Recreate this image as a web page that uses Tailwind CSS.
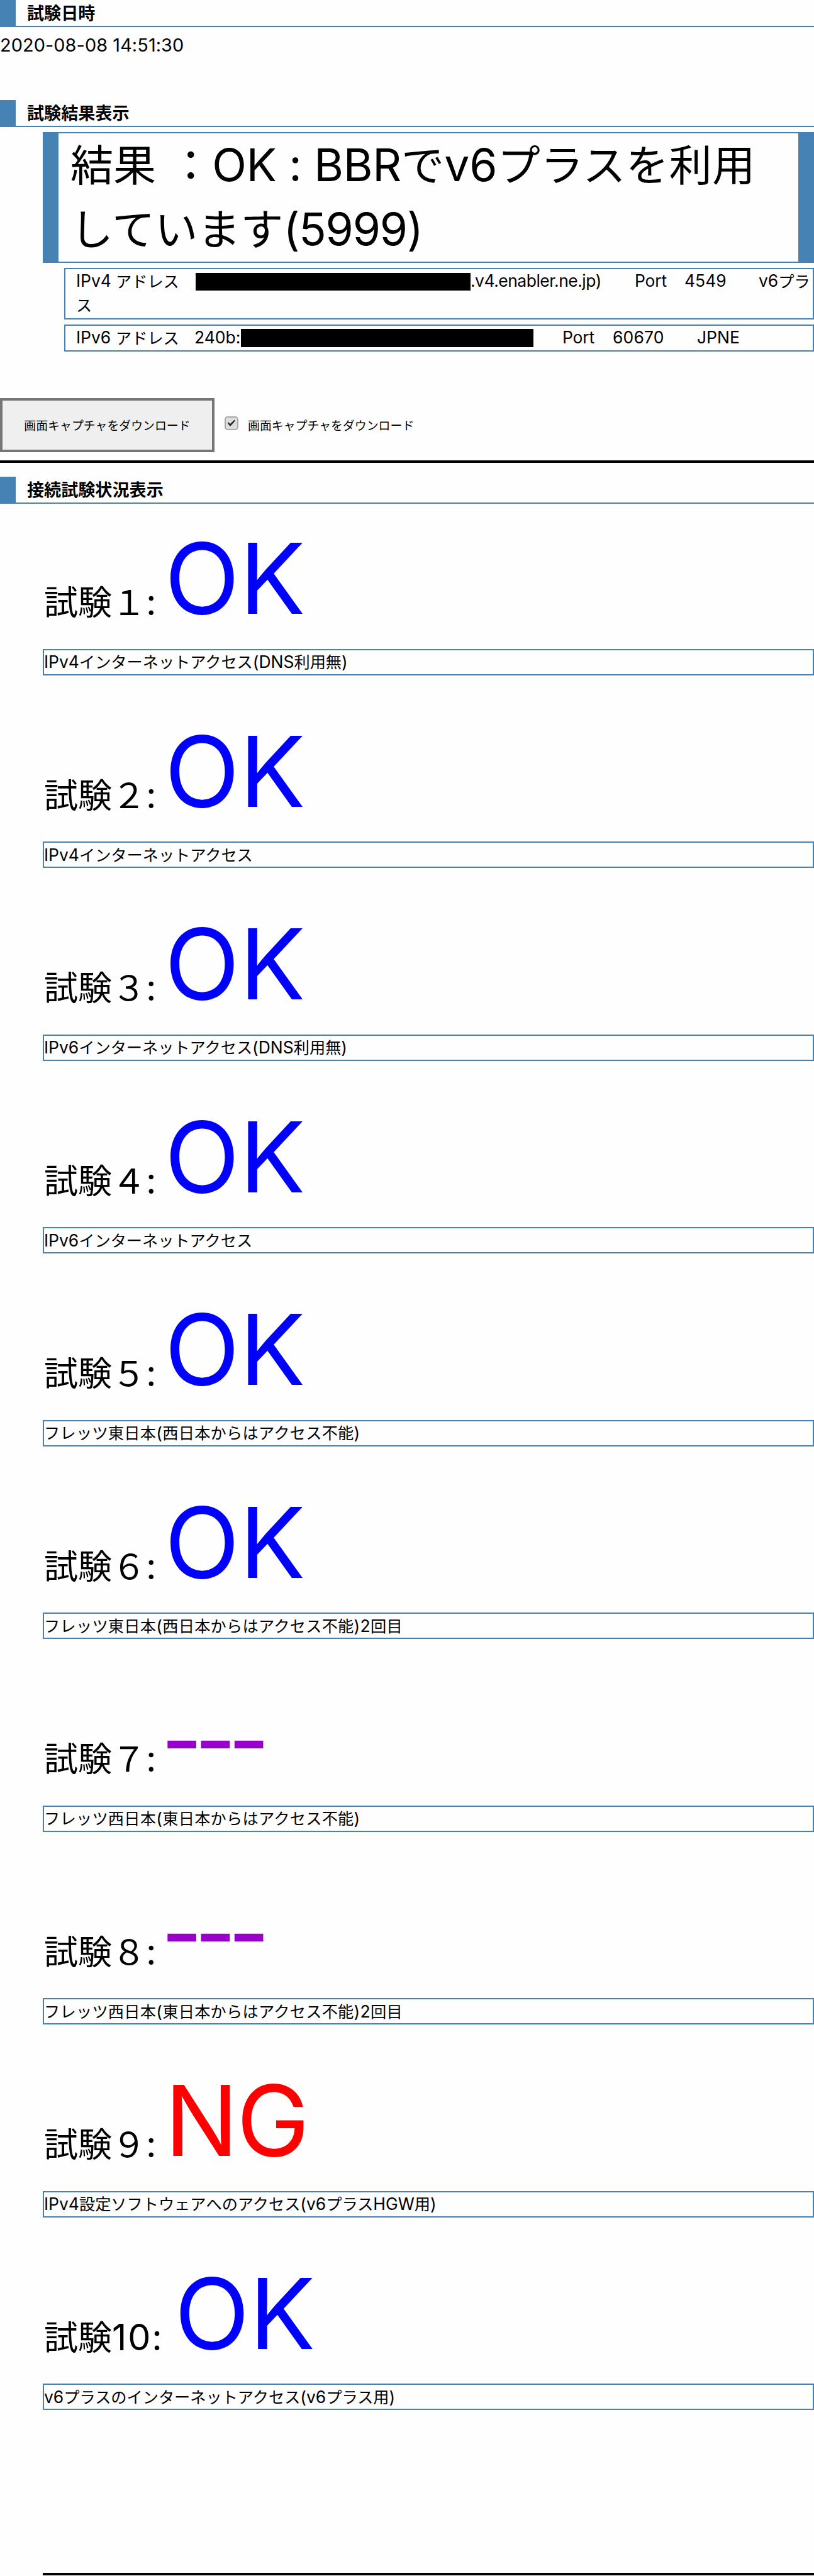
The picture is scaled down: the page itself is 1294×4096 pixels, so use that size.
<!DOCTYPE html>
<html lang="ja">
<head>
<meta charset="utf-8">
<title>試験結果表示</title>
<script src="https://cdn.jsdelivr.net/npm/@tailwindcss/browser@4"></script>
</head>
<body class="w-[1294px] h-[4096px] overflow-hidden bg-[#fefefe] text-black font-['Noto_Sans_CJK_JP',sans-serif] whitespace-nowrap">
<h2 class="h-[42.5px] border-l-[25px] border-b-2 border-[#4682b4] pl-[18px] text-[27.1px] leading-[40px] font-bold">試験日時</h2>
<p class="h-[116px] text-[27.2px] leading-[54.6px]"><span class="font-[Inter] text-[1.06em] leading-none tracking-[0.1px]">2020-08-08 14:51:30</span></p>
<h2 class="h-[43px] border-l-[25px] border-b-2 border-[#4682b4] pl-[18px] text-[27.1px] leading-[40px] font-bold">試験結果表示</h2>
<section class="mt-2 ml-[68px] h-[208.5px] border-x-[25px] border-y-2 border-[#4682b4] pl-[19px]">
<p class="-mt-[4px] text-[68.1px] leading-[102px]">結果<span class="inline-block w-[21px]"> </span>：<span class="font-[Inter] text-[1.05em] leading-none tracking-[-0.3px]">OK : BBR</span>で<span class="font-[Inter] text-[1.05em] leading-none">v6</span><span class="tracking-[0.5px]">プラスを利用</span><br>しています<span class="font-[Inter] text-[1.05em] leading-none tracking-[-1.2px]">(5999)</span></p>
</section>
<div class="ml-[102px] mt-2 h-[82px] border-2 border-[#4682b4] pl-[17px] text-[25.2px]">
<div class="-mt-px flex leading-[38.3px]"><span class="w-[63px] font-[Inter] text-[1.05em]">IPv4</span><span class="w-[127px]">アドレス</span><span class="mt-[7px] h-7 w-[437px] bg-black"></span><span class="w-[261px] font-[Inter] text-[1.05em] tracking-[-0.5px]">.v4.enabler.ne.jp)</span><span class="w-[79px] font-[Inter] text-[1.05em] tracking-[-0.2px]">Port</span><span class="w-[118px] font-[Inter] text-[1.05em]">4549</span><span class="font-[Inter] text-[1.05em]">v6</span><span>プラ</span></div>
<div class="leading-[38.3px]">ス</div>
</div>
<div class="ml-[102px] mt-2 h-[43px] border-2 border-[#4682b4] pl-[17px] text-[25.2px]">
<div class="-mt-px flex leading-[38.3px]"><span class="w-[63px] font-[Inter] text-[1.05em]">IPv6</span><span class="w-[125px]">アドレス</span><span class="w-[74px] font-[Inter] text-[1.05em]">240b:</span><span class="mt-[6px] h-[29px] w-[465px] bg-black"></span><span class="ml-[46px] w-[80px] font-[Inter] text-[1.05em] tracking-[-0.2px]">Port</span><span class="w-[134px] font-[Inter] text-[1.05em] tracking-[0.2px]">60670</span><span class="font-[Inter] text-[1.05em]">JPNE</span></div>
</div>
<div class="mt-[74px] flex h-[86px] items-center text-[18.9px]">
<button class="h-full w-[341px] border-4 border-[#767676] bg-[#efefef]">画面キャプチャをダウンロード</button>
<span class="ml-4 -mt-[6px] block h-[22px] w-[22px] rounded-[5px] border-2 border-[#a9a9a9] bg-[#dedede]"><svg viewBox="0 0 18 18" class="h-full w-full"><path d="M2.5 8.5 L4.5 7.5 L7 10 L13.5 3.5 L15 5 L7 14 Z" fill="#222"/></svg></span>
<label class="ml-[15px]">画面キャプチャをダウンロード</label>
</div>
<hr class="mt-[13px] border-t-4 border-black">
<h2 class="mt-[22px] h-[42.5px] border-l-[25px] border-b-2 border-[#4682b4] pl-[18px] text-[27.1px] leading-[40px] font-bold">接続試験状況表示</h2>

<main class="-mt-[33px] ml-[68px]">
<section class="h-[306.5px]">
<p class="h-[264.2px] pt-[74.5px] pl-[2px] text-[54px] leading-none"><span class="align-[-2px]">試験１<span class="font-[Inter] text-[57.4px] leading-none tracking-[-1.5px]">: </span></span><span class="font-[Inter] text-[155.7px] leading-none text-[#0000ff]">OK</span></p>
<div class="h-[42.3px] border-2 border-[#4682b4] text-[25.2px] leading-[38px]"><p class="-mt-[1.5px]"><span class="font-[Inter] text-[1.05em] leading-none">IPv4</span>インターネットアクセス<span class="font-[Inter] text-[1.05em] leading-none">(DNS</span>利用無<span class="font-[Inter] text-[1.05em] leading-none">)</span></p></div>
</section>
<section class="h-[306.5px]">
<p class="h-[264.2px] pt-[74.5px] pl-[2px] text-[54px] leading-none"><span class="align-[-2px]">試験２<span class="font-[Inter] text-[57.4px] leading-none tracking-[-1.5px]">: </span></span><span class="font-[Inter] text-[155.7px] leading-none text-[#0000ff]">OK</span></p>
<div class="h-[42.3px] border-2 border-[#4682b4] text-[25.2px] leading-[38px]"><p class="-mt-[1.5px]"><span class="font-[Inter] text-[1.05em] leading-none">IPv4</span>インターネットアクセス</p></div>
</section>
<section class="h-[306.5px]">
<p class="h-[264.2px] pt-[74.5px] pl-[2px] text-[54px] leading-none"><span class="align-[-2px]">試験３<span class="font-[Inter] text-[57.4px] leading-none tracking-[-1.5px]">: </span></span><span class="font-[Inter] text-[155.7px] leading-none text-[#0000ff]">OK</span></p>
<div class="h-[42.3px] border-2 border-[#4682b4] text-[25.2px] leading-[38px]"><p class="-mt-[1.5px]"><span class="font-[Inter] text-[1.05em] leading-none">IPv6</span>インターネットアクセス<span class="font-[Inter] text-[1.05em] leading-none">(DNS</span>利用無<span class="font-[Inter] text-[1.05em] leading-none">)</span></p></div>
</section>
<section class="h-[306.5px]">
<p class="h-[264.2px] pt-[74.5px] pl-[2px] text-[54px] leading-none"><span class="align-[-2px]">試験４<span class="font-[Inter] text-[57.4px] leading-none tracking-[-1.5px]">: </span></span><span class="font-[Inter] text-[155.7px] leading-none text-[#0000ff]">OK</span></p>
<div class="h-[42.3px] border-2 border-[#4682b4] text-[25.2px] leading-[38px]"><p class="-mt-[1.5px]"><span class="font-[Inter] text-[1.05em] leading-none">IPv6</span>インターネットアクセス</p></div>
</section>
<section class="h-[306.5px]">
<p class="h-[264.2px] pt-[74.5px] pl-[2px] text-[54px] leading-none"><span class="align-[-2px]">試験５<span class="font-[Inter] text-[57.4px] leading-none tracking-[-1.5px]">: </span></span><span class="font-[Inter] text-[155.7px] leading-none text-[#0000ff]">OK</span></p>
<div class="h-[42.3px] border-2 border-[#4682b4] text-[25.2px] leading-[38px]"><p class="-mt-[1.5px] tracking-[0.28px]">フレッツ東日本<span class="font-[Inter] text-[1.05em] leading-none">(</span>西日本からはアクセス不能<span class="font-[Inter] text-[1.05em] leading-none">)</span></p></div>
</section>
<section class="h-[306.5px]">
<p class="h-[264.2px] pt-[74.5px] pl-[2px] text-[54px] leading-none"><span class="align-[-2px]">試験６<span class="font-[Inter] text-[57.4px] leading-none tracking-[-1.5px]">: </span></span><span class="font-[Inter] text-[155.7px] leading-none text-[#0000ff]">OK</span></p>
<div class="h-[42.3px] border-2 border-[#4682b4] text-[25.2px] leading-[38px]"><p class="-mt-[1.5px] tracking-[0.28px]">フレッツ東日本<span class="font-[Inter] text-[1.05em] leading-none">(</span>西日本からはアクセス不能<span class="font-[Inter] text-[1.05em] leading-none">)2</span>回目</p></div>
</section>
<section class="h-[306.5px]">
<p class="h-[264.2px] pt-[74.5px] pl-[2px] text-[54px] leading-none"><span class="align-[-2px]">試験７<span class="font-[Inter] text-[57.4px] leading-none tracking-[-1.5px]">: </span></span><span class="font-[Inter] text-[155.7px] leading-none text-[#9900cc]"><span class="-ml-[4px] inline-block origin-left scale-x-120 font-['Liberation_Sans'] tracking-[-7.5px]">---</span></span></p>
<div class="h-[42.3px] border-2 border-[#4682b4] text-[25.2px] leading-[38px]"><p class="-mt-[1.5px] tracking-[0.28px]">フレッツ西日本<span class="font-[Inter] text-[1.05em] leading-none">(</span>東日本からはアクセス不能<span class="font-[Inter] text-[1.05em] leading-none">)</span></p></div>
</section>
<section class="h-[306.5px]">
<p class="h-[264.2px] pt-[74.5px] pl-[2px] text-[54px] leading-none"><span class="align-[-2px]">試験８<span class="font-[Inter] text-[57.4px] leading-none tracking-[-1.5px]">: </span></span><span class="font-[Inter] text-[155.7px] leading-none text-[#9900cc]"><span class="-ml-[4px] inline-block origin-left scale-x-120 font-['Liberation_Sans'] tracking-[-7.5px]">---</span></span></p>
<div class="h-[42.3px] border-2 border-[#4682b4] text-[25.2px] leading-[38px]"><p class="-mt-[1.5px] tracking-[0.28px]">フレッツ西日本<span class="font-[Inter] text-[1.05em] leading-none">(</span>東日本からはアクセス不能<span class="font-[Inter] text-[1.05em] leading-none">)2</span>回目</p></div>
</section>
<section class="h-[306.5px]">
<p class="h-[264.2px] pt-[74.5px] pl-[2px] text-[54px] leading-none"><span class="align-[-2px]">試験９<span class="font-[Inter] text-[57.4px] leading-none tracking-[-1.5px]">: </span></span><span class="font-[Inter] text-[155.7px] leading-none tracking-[-3px] text-[#ff0000]">NG</span></p>
<div class="h-[42.3px] border-2 border-[#4682b4] text-[25.2px] leading-[38px]"><p class="-mt-[1.5px]"><span class="font-[Inter] text-[1.05em] leading-none">IPv4</span>設定ソフトウェアへのアクセス<span class="font-[Inter] text-[1.05em] leading-none">(v6</span>プラス<span class="font-[Inter] text-[1.05em] leading-none">HGW</span>用<span class="font-[Inter] text-[1.05em] leading-none">)</span></p></div>
</section>
<section class="h-[306.5px]">
<p class="h-[264.2px] pt-[74.5px] pl-[2px] text-[54px] leading-none"><span class="align-[-2px]">試験<span class="font-[Inter] text-[57.4px] leading-none tracking-[1.8px]">10: </span></span><span class="font-[Inter] text-[155.7px] leading-none text-[#0000ff]">OK</span></p>
<div class="h-[42.3px] border-2 border-[#4682b4] text-[25.2px] leading-[38px]"><p class="-mt-[1.5px]"><span class="font-[Inter] text-[1.05em] leading-none">v6</span>プラスのインターネットアクセス<span class="font-[Inter] text-[1.05em] leading-none">(v6</span>プラス用<span class="font-[Inter] text-[1.05em] leading-none">)</span></p></div>
</section>
<hr class="mt-[258px] border-t-4 border-black">
</main>
</body>
</html>
